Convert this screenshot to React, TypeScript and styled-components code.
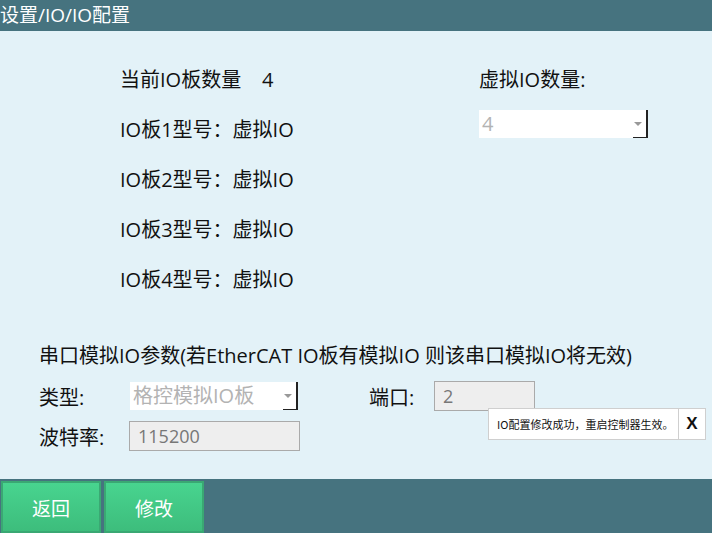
import React from 'react';
import styled, { createGlobalStyle } from 'styled-components';

const GlobalStyle = createGlobalStyle`
  html, body {
    margin: 0;
    padding: 0;
    width: 712px;
    height: 533px;
    overflow: hidden;
    font-family: "Open Sans", "Noto Sans CJK SC", sans-serif;
  }
`;

const Page = styled.div`
  width: 712px;
  height: 533px;
  display: flex;
  flex-direction: column;
  position: relative;
  background: #e3f2f8;
`;

const Header = styled.div`
  height: 31px;
  background: #46737f;
  color: #ffffff;
  font-size: 19px;
  line-height: 31px;
  white-space: nowrap;
`;

const Body = styled.div`
  flex: 1;
  padding-top: 24px;
  color: #111;
  font-size: 20px;
`;

const TopSection = styled.div`
  display: flex;
`;

const LeftColumn = styled.div`
  margin-left: 120px;
  width: 359px;
`;

const InfoRow = styled.div`
  height: 50px;
  line-height: 50px;
  white-space: nowrap;
`;

const RightColumn = styled.div`
  display: flex;
  flex-direction: column;
`;

const Select = styled.div<{ $width: number; $offset?: number }>`
  position: relative;
  width: ${(p) => p.$width}px;
  height: 28px;
  background: #ffffff;
  color: #b3b3b3;
  font-size: 20px;
  line-height: 28px;
  padding-left: 3px;
  box-sizing: border-box;
  white-space: nowrap;
  margin-top: ${(p) => p.$offset ?? 0}px;
  &::after {
    content: '';
    position: absolute;
    right: 0;
    top: 0;
    width: 15px;
    height: 28px;
    border-right: 2px solid #222;
    border-bottom: 1px solid #222;
    box-sizing: border-box;
  }
`;

const Arrow = styled.span`
  position: absolute;
  right: 6px;
  top: 12px;
  width: 0;
  height: 0;
  border-left: 4px solid transparent;
  border-right: 4px solid transparent;
  border-top: 4px solid #999;
`;

const Serial = styled.div`
  margin-left: 39px;
  margin-top: 36px;
`;

const SerialTitle = styled.div`
  height: 30px;
  line-height: 30px;
  white-space: nowrap;
`;

const FieldRow = styled.div`
  display: flex;
  align-items: center;
  height: 30px;
  margin-top: 10px;
`;

const Label = styled.div<{ $width: number; $gapBefore?: number }>`
  width: ${(p) => p.$width}px;
  margin-left: ${(p) => p.$gapBefore ?? 0}px;
  white-space: nowrap;
`;

const Input = styled.div<{ $width: number }>`
  width: ${(p) => p.$width}px;
  height: 30px;
  background: #eeeeee;
  border: 1px solid #aaaaaa;
  box-sizing: border-box;
  color: #777;
  font-size: 18px;
  line-height: 28px;
  padding-left: 8px;
`;

const Toast = styled.div`
  position: absolute;
  left: 488px;
  top: 408px;
  width: 218px;
  height: 32px;
  background: #ffffff;
  border: 1px solid #cfcfcf;
  box-sizing: border-box;
  display: flex;
  align-items: stretch;
`;

const ToastText = styled.div`
  flex: 1;
  font-family: "Noto Sans CJK SC", sans-serif;
  font-size: 11px;
  color: #111;
  line-height: 30px;
  padding-left: 8px;
  white-space: nowrap;
`;

const ToastClose = styled.div`
  width: 26px;
  border-left: 1px solid #cfcfcf;
  font-family: "Liberation Sans", Arial, sans-serif;
  font-weight: bold;
  font-size: 17px;
  line-height: 30px;
  text-align: center;
  color: #111;
`;

const Footer = styled.div`
  height: 54px;
  background: #46737f;
  display: flex;
  gap: 3px;
  padding: 2px 0 0 1px;
  box-sizing: border-box;
`;

const FooterButton = styled.button`
  width: 100px;
  height: 52px;
  border: 2px solid #3aa873;
  background: linear-gradient(#48d48f, #3dbd7c);
  color: #ffffff;
  font-family: "Noto Sans CJK SC", sans-serif;
  font-size: 19px;
  padding: 0;
  cursor: pointer;
`;

const App: React.FC = () => {
  const boards = [1, 2, 3, 4];
  return (
    <>
      <GlobalStyle />
      <Page>
        <Header>设置/IO/IO配置</Header>
        <Body>
          <TopSection>
            <LeftColumn>
              <InfoRow>当前IO板数量&nbsp;&nbsp;&nbsp;&nbsp;4</InfoRow>
              {boards.map((n) => (
                <InfoRow key={n}>IO板{n}型号：虚拟IO</InfoRow>
              ))}
            </LeftColumn>
            <RightColumn>
              <InfoRow>虚拟IO数量:</InfoRow>
              <Select $width={169} $offset={5}>
                4
                <Arrow />
              </Select>
            </RightColumn>
          </TopSection>
          <Serial>
            <SerialTitle>串口模拟IO参数(若EtherCAT IO板有模拟IO 则该串口模拟IO将无效)</SerialTitle>
            <FieldRow>
              <Label $width={91}>类型:</Label>
              <Select $width={168}>
                格控模拟IO板
                <Arrow />
              </Select>
              <Label $width={65} $gapBefore={71}>端口:</Label>
              <Input $width={101}>2</Input>
            </FieldRow>
            <FieldRow>
              <Label $width={90}>波特率:</Label>
              <Input $width={171}>115200</Input>
            </FieldRow>
          </Serial>
        </Body>
        <Footer>
          <FooterButton>返回</FooterButton>
          <FooterButton>修改</FooterButton>
        </Footer>
        <Toast>
          <ToastText>IO配置修改成功，重启控制器生效。</ToastText>
          <ToastClose>X</ToastClose>
        </Toast>
      </Page>
    </>
  );
};

export default App;
